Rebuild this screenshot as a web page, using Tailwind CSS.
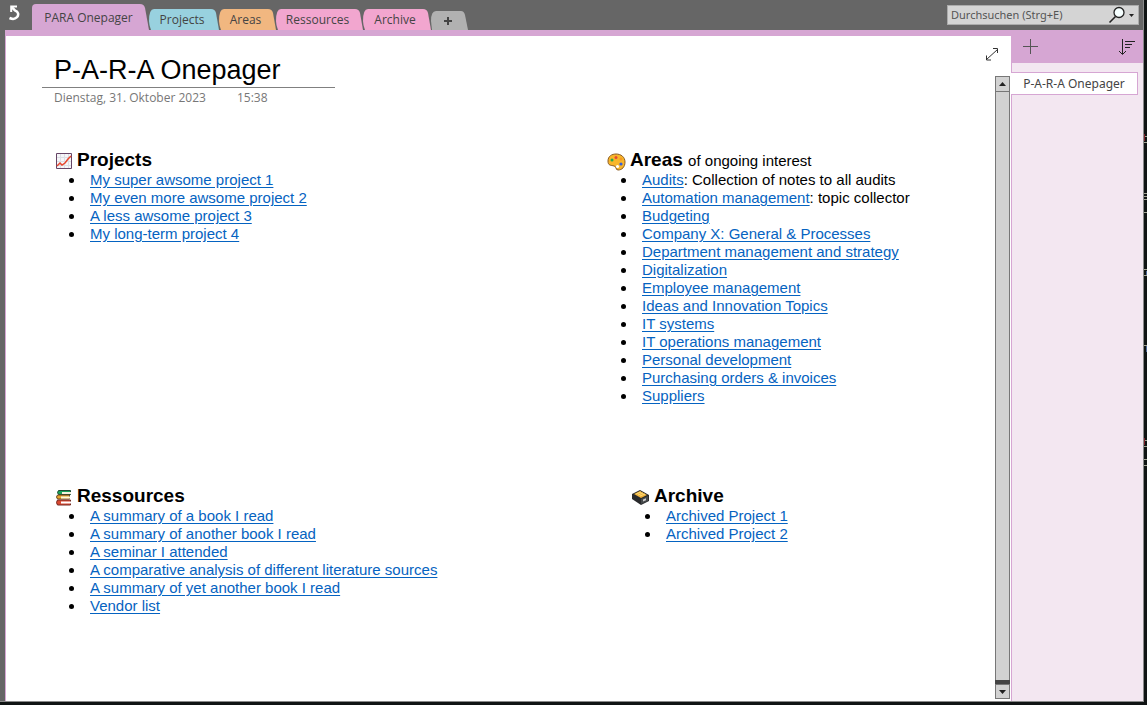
<!DOCTYPE html>
<html lang="de">
<head>
<meta charset="utf-8">
<meta name="viewport" content="width=device-width, initial-scale=1">
<title>P-A-R-A Onepager</title>
<script src="https://cdn.jsdelivr.net/npm/@tailwindcss/browser@4"></script>
</head>
<body class="flex h-screen overflow-hidden bg-[#101414] pb-[3px] font-['Open_Sans',sans-serif] text-xs text-[#444444]">
<div class="flex min-w-0 flex-1 flex-col border-r border-b border-[#8a8a8a] bg-[#666666]">
  <header class="flex h-[30px] shrink-0 items-end justify-between pr-1">
    <div class="flex h-full items-end">
      <button aria-label="Zurück" class="mr-2 h-full w-6 pl-2">
        <svg class="mb-1 h-4 w-4" viewBox="0 0 16 16" fill="none" stroke="#fff"><path d="M9 1.500H3.200V7" stroke-width="2"/><path d="M3.500 2L7 5.500C10.500 6.500 11 10 9 12.200C7 14.300 4 14.200 1.500 13" stroke-width="2.500"/></svg>
      </button>
      <nav aria-label="Abschnitte" class="flex items-end">
        <button class="relative h-[26px] w-[117px] pr-1 pt-px">
          <svg class="absolute inset-0 h-full w-full" viewBox="0 0 118 26" preserveAspectRatio="none"><path d="M0 26V4Q0 0 4 0H109Q113 0 114 4L118 26Z" fill="#d6a6d3"/></svg>
          <span class="relative">PARA Onepager</span>
        </button>
        <button class="relative h-[21px] w-[70px] pr-1">
          <svg class="absolute inset-0 h-full w-full" viewBox="0 0 70 21" preserveAspectRatio="none"><path d="M2 21Q0 16 0 12Q0 0 5 0H62Q66 0 67 4L70 21Z" fill="#98d1df"/></svg>
          <span class="relative">Projects</span>
        </button>
        <button class="relative h-[21px] w-[57px] pr-1">
          <svg class="absolute inset-0 h-full w-full" viewBox="0 0 57 21" preserveAspectRatio="none"><path d="M2 21Q0 16 0 12Q0 0 5 0H49Q53 0 54 4L57 21Z" fill="#f1b780"/></svg>
          <span class="relative">Areas</span>
        </button>
        <button class="relative h-[21px] w-[87px] pr-1">
          <svg class="absolute inset-0 h-full w-full" viewBox="0 0 87 21" preserveAspectRatio="none"><path d="M2 21Q0 16 0 12Q0 0 5 0H79Q83 0 84 4L87 21Z" fill="#f2a6cf"/></svg>
          <span class="relative">Ressources</span>
        </button>
        <button class="relative h-[21px] w-[68px] pr-1">
          <svg class="absolute inset-0 h-full w-full" viewBox="0 0 68 21" preserveAspectRatio="none"><path d="M2 21Q0 16 0 12Q0 0 5 0H60Q64 0 65 4L68 21Z" fill="#f2a6cf"/></svg>
          <span class="relative">Archive</span>
        </button>
        <button aria-label="Neuer Abschnitt" class="h-[19px] w-[37px]">
          <svg class="h-full w-full" viewBox="0 0 37 19"><path d="M1 19L0 10Q0 0 5 0H30Q33 0 34 4L37 19Z" fill="#b1b1b1"/><path d="M13 10h8M17 6v8" stroke="#444" stroke-width="2"/></svg>
        </button>
      </nav>
    </div>
    <form class="mb-[5px] flex h-5 w-48 items-center border border-[#ababab] bg-[#d4d4d4]">
      <input aria-label="Durchsuchen" placeholder="Durchsuchen (Strg+E)" class="min-w-0 flex-1 bg-transparent pl-[3px] font-['Noto_Sans',sans-serif] text-[11px] outline-none placeholder:text-[#555555]">
      <button type="button" aria-label="Suchen" class="h-full w-[30px] shrink-0"><svg class="h-full w-full" viewBox="0 0 30 18"><circle cx="11" cy="6.500" r="5" fill="#f6ffff" stroke="#222" stroke-width="1.300"/><path d="M7.500 10.500L1.500 16.500" stroke="#222" stroke-width="1.600"/><path d="M21 8h5l-2.500 3z" fill="#222"/></svg></button>
    </form>
  </header>
  <div class="ml-[5px] flex min-h-0 flex-1 border-t border-l border-[#d6a6d3]">
    <main class="flex min-w-0 flex-1 flex-col border-t-5 border-[#d6a6d3] bg-white">
      <div class="flex min-h-0 flex-1">
        <article class="min-w-0 flex-1 pl-9 font-['Liberation_Sans',sans-serif] text-[15px] leading-[18px] text-black">
          <h1 class="mt-4 h-9 w-[293px] border-b border-[#808080] pl-3 text-[27px] leading-9 whitespace-nowrap">P-A-R-A Onepager</h1>
          <p class="flex gap-[31px] pl-3 pt-px font-['Open_Sans',sans-serif] text-xs leading-[18px] text-[#777777]"><time>Dienstag, 31. Oktober 2023</time><time>15:38</time></p>
          <div class="mt-[42px] grid grid-cols-[minmax(0,552fr)_minmax(0,389fr)] gap-y-20 pl-3">
            <section>
              <h2 class="flex h-[22px] items-center gap-1 pl-px text-[19px] font-bold">
                <svg class="mt-[3px] h-[17px] w-[18px]" viewBox="0 0 18 17"><path d="M1.500.5h15v15h-15z" fill="#f5f5f8" stroke="#654566"/><path d="M5.500 1v14M9.500 1v14M13.500 1v14M2 4.500h14M2 8.500h14M2 12.500h14" stroke="#dcdfe5"/><path d="M2 13l3-3 2 2 3-2 3-4 3-3" fill="none" stroke="#e8452c" stroke-width="1.500"/></svg>Projects</h2>
              <ul class="list-disc pl-[31px] marker:text-black [&_li]:pl-[5px] [&_a]:text-[#0563c1] [&_a]:underline [&_a]:underline-offset-2">
                <li><a href="#">My super awsome project 1</a></li>
                <li><a href="#">My even more awsome project 2</a></li>
                <li><a href="#">A less awsome project 3</a></li>
                <li><a href="#">My long-term project 4</a></li>
              </ul>
            </section>
            <section>
              <h2 class="flex h-[22px] items-center gap-1 pl-px text-[19px] font-bold">
                <svg class="mt-[3px] h-[18px] w-[19px]" viewBox="0 0 19 18"><path d="M1 8C1 3 5 1 9 1c5 0 9 3 9 8s-3 8-7 8c-3 0-1-4-4-4-3-1-6 0-6-5z" fill="#f8b62a" stroke="#8a5a22"/><circle cx="5" cy="7" r="1.500" fill="#2aa84a"/><circle cx="9" cy="4.500" r="1.500" fill="#e34832"/><circle cx="14" cy="6" r="1.500" fill="#f59a22"/><circle cx="14" cy="11" r="1.600" fill="#315ee0"/><circle cx="10.500" cy="13.500" r="1.600" fill="#fff"/></svg><span>Areas <span class="text-[15px] font-normal">of ongoing interest</span></span></h2>
              <ul class="list-disc pl-[31px] marker:text-black [&_li]:pl-[5px] [&_a]:text-[#0563c1] [&_a]:underline [&_a]:underline-offset-2">
                <li><a href="#">Audits</a>: Collection of notes to all audits</li>
                <li><a href="#">Automation management</a>: topic collector</li>
                <li><a href="#">Budgeting</a></li>
                <li><a href="#">Company X: General &amp; Processes</a></li>
                <li><a href="#">Department management and strategy</a></li>
                <li><a href="#">Digitalization</a></li>
                <li><a href="#">Employee management</a></li>
                <li><a href="#">Ideas and Innovation Topics</a></li>
                <li><a href="#">IT systems</a></li>
                <li><a href="#">IT operations management</a></li>
                <li><a href="#">Personal development</a></li>
                <li><a href="#">Purchasing orders &amp; invoices</a></li>
                <li><a href="#">Suppliers</a></li>
              </ul>
            </section>
            <section>
              <h2 class="flex h-[22px] items-center gap-1 pl-px text-[19px] font-bold">
                <svg class="mt-[3px] h-[17px] w-[18px]" viewBox="0 0 18 17"><path d="M3.500 1.500h12v4h-12q-2-2 0-4z" fill="#18a35c" stroke="#204b35"/><path d="M7 3h9v2H7z" fill="#f6f3df"/><path d="M2.500 6h12v4h-12q-2-2 0-4z" fill="#e8a52f" stroke="#674625"/><path d="M6 7.500h9v2H6z" fill="#fff8dc"/><path d="M2.500 11h13v5h-13q-2-2.500 0-5z" fill="#d94830" stroke="#762a22"/><path d="M6 12.500h10v2H6z" fill="#fff"/></svg>Ressources</h2>
              <ul class="list-disc pl-[31px] marker:text-black [&_li]:pl-[5px] [&_a]:text-[#0563c1] [&_a]:underline [&_a]:underline-offset-2">
                <li><a href="#">A summary of a book I read</a></li>
                <li><a href="#">A summary of another book I read</a></li>
                <li><a href="#">A seminar I attended</a></li>
                <li><a href="#">A comparative analysis of different literature sources</a></li>
                <li><a href="#">A summary of yet another book I read</a></li>
                <li><a href="#">Vendor list</a></li>
              </ul>
            </section>
            <section class="pl-6">
              <h2 class="flex h-[22px] items-center gap-1 pl-px text-[19px] font-bold">
                <svg class="mt-[3px] h-[17px] w-[19px]" viewBox="0 0 19 17"><path d="M1 5l8-4 9 5v6l-8 4-9-6z" fill="#292a2c"/><path d="M3 5l6-3 7 4-6 3z" fill="#eeb13a"/><path d="M5 5l5-2M7 6l5-2M9 7l5-2" stroke="#ffdc79"/><path d="M10 10l7-3v5l-7 3z" fill="#45494b"/><path d="M12 10.500l3-1.200v2l-3 1.200z" fill="#ccc"/></svg>Archive</h2>
              <ul class="list-disc pl-[31px] marker:text-black [&_li]:pl-[5px] [&_a]:text-[#0563c1] [&_a]:underline [&_a]:underline-offset-2">
                <li><a href="#">Archived Project 1</a></li>
                <li><a href="#">Archived Project 2</a></li>
              </ul>
            </section>
          </div>
        </article>
        <div class="mr-px flex w-[15px] shrink-0 flex-col pb-[2px]">
          <button aria-label="Ganzseitenansicht" class="-ml-[10px] mt-3 mb-[15px] h-[13px] w-[14px]"><svg class="h-[13px] w-[14px]" viewBox="0 0 14 13" fill="none" stroke="#333"><path d="M1.500 11.500L12.500 1.500M8 .5h4.500V5M1.500 7.500v4.500H6"/></svg></button>
          <button aria-label="Nach oben" class="h-4 shrink-0 border border-[#777777] bg-[#d2d2d2]"><svg class="h-full w-full" viewBox="0 0 13 14"><path d="M3 9h7L6.500 5z" fill="#222"/></svg></button>
          <div class="flex-1 border-x border-[#777777] bg-[#d2d2d2]"></div>
          <div class="h-1 shrink-0 bg-[#444444]"></div>
          <button aria-label="Nach unten" class="h-[15px] shrink-0 border border-[#777777] bg-[#d2d2d2]"><svg class="h-full w-full" viewBox="0 0 13 13"><path d="M3 5h7L6.500 9z" fill="#222"/></svg></button>
        </div>
      </div>
    </main>
    <aside class="w-[132px] shrink-0 border-l border-[#d6a6d3] bg-[#f3e7f1]">
      <div class="flex h-8 items-center justify-between bg-[#d6a6d3] pr-2 pl-[11px]">
        <button aria-label="Seite hinzufügen"><svg class="h-4 w-4" viewBox="0 0 16 16" stroke="#555"><path d="M0 7.500h15M7.500 0v15"/></svg></button>
        <button aria-label="Seiten sortieren"><svg class="h-4 w-4" viewBox="0 0 16 16" fill="none" stroke="#222"><path d="M3.500 0v15M0 12l3.500 3.500L7 12M6 2.500h10M6 5.500h7M6 8.500h5"/></svg></button>
      </div>
      <button class="mt-[9px] -ml-px h-[23px] w-[127px] border border-l-0 border-[#d6a6d3] bg-white font-['Noto_Sans',sans-serif]">P-A-R-A Onepager</button>
    </aside>
  </div>
</div>
<div class="w-[3px] shrink-0">
  <!-- Edge of the window lying behind this one -->
  <svg class="h-[480px] w-[3px]" viewBox="0 0 3 480" aria-hidden="true"><g stroke="#a5a595"><path d="M0 136.500h3M0 142.500h3M0 193.500h3M0 196.500h3M0 199.500h3M0 212.500h3M0 269.500h3M0 275.500h3M0 345.500h3M0 440.500h3M0 446.500h3M0 459.500h3M0 465.500h3"/></g><path d="M.5 134v7M.5 438v7" stroke="#7d1f28"/><path d="M2.500 271v4M2.500 346v6" stroke="#4a6494"/></svg>
</div>
</body>
</html>
